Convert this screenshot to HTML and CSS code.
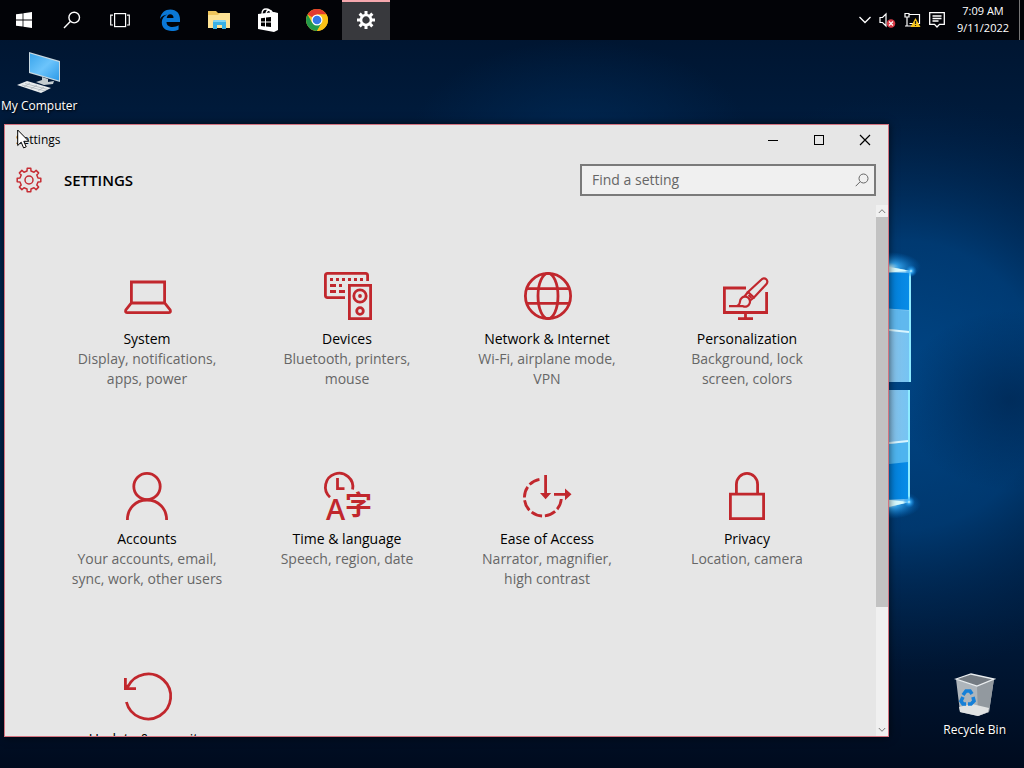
FILE: index.html
```html
<!DOCTYPE html>
<html lang="en">
<head>
<meta charset="utf-8">
<title>Settings</title>
<link rel="stylesheet" href="styles.css">
</head>
<body>
<div class="desktop">
  <svg class="wallpaper" viewBox="0 0 1024 768" preserveAspectRatio="xMaxYMid slice" aria-hidden="true">
    <defs>
      <linearGradient id="base" x1="0" y1="0" x2="0" y2="1">
        <stop offset="0" stop-color="#00132c"/><stop offset=".16" stop-color="#001b3c"/><stop offset=".45" stop-color="#002a58"/><stop offset=".8" stop-color="#001b3c"/><stop offset="1" stop-color="#000b1e"/>
      </linearGradient>
      <radialGradient id="glow" gradientUnits="userSpaceOnUse" cx="900" cy="385" r="290">
        <stop offset="0" stop-color="#004c90" stop-opacity=".8"/><stop offset=".5" stop-color="#00488a" stop-opacity=".6"/><stop offset="1" stop-color="#002650" stop-opacity="0"/>
      </radialGradient>
      <radialGradient id="beam"><stop offset="0" stop-color="#002c5a" stop-opacity=".7"/><stop offset="1" stop-color="#002c5a" stop-opacity="0"/></radialGradient>
      <radialGradient id="shade"><stop offset="0" stop-color="#001c40" stop-opacity=".5"/><stop offset="1" stop-color="#001c40" stop-opacity="0"/></radialGradient>
      <radialGradient id="flare"><stop offset="0" stop-color="#d8fbff"/><stop offset=".3" stop-color="#3cb4ff" stop-opacity=".8"/><stop offset="1" stop-color="#0078d8" stop-opacity="0"/></radialGradient>
      <linearGradient id="pane"><stop offset="0" stop-color="#8fc0e4"/><stop offset="1" stop-color="#74c4f4"/></linearGradient>
      <linearGradient id="deep"><stop offset="0" stop-color="#0078d0"/><stop offset="1" stop-color="#088ce8"/></linearGradient>
    </defs>
    <rect width="1024" height="768" fill="url(#base)"/>
    <ellipse cx="580" cy="140" rx="170" ry="100" fill="url(#beam)"/>
    <rect width="1024" height="768" fill="url(#glow)"/>
    <ellipse cx="1010" cy="400" rx="110" ry="90" fill="url(#shade)"/>
    <ellipse cx="889" cy="267" rx="32" ry="15" fill="url(#flare)"/>
    <ellipse cx="889" cy="504" rx="32" ry="15" fill="url(#flare)"/>
    <path d="M880 265L911 271V382H880z" fill="url(#pane)"/>
    <path d="M880 272L909 273V310L880 308z" fill="url(#deep)"/>
    <path d="M880 308L909 311V331L880 328z" fill="#60b8ee"/>
    <path d="M880 329L909 332" stroke="#d8f5ff" stroke-width="2"/>
    <path d="M880 390H910V502L880 509z" fill="url(#pane)"/>
    <path d="M880 445L908 442V463L880 465z" fill="#4eb4ef"/>
    <path d="M880 465L908 462V499L880 500z" fill="url(#deep)"/>
    <path d="M880 444L908 441" stroke="#d8f5ff" stroke-width="2"/>
    <path d="M880 265L911 271L880 273zM880 509L910 502L880 499z" fill="#d8fbff"/>
    <path d="M910 271V382M909 390V502" stroke="#8deaff" stroke-width="2" fill="none"/>
    <circle cx="911" cy="271" r="6" fill="url(#flare)"/><circle cx="909" cy="502" r="6" fill="url(#flare)"/>
  </svg>

  <header class="taskbar">
    <nav class="tasks" aria-label="Taskbar">
      <button class="task" aria-label="Start"><svg width="16" height="16" viewBox="0 0 16 16" fill="#fff"><path d="M0 2.3L6.6 1.4V7.6H0zM7.4 1.3L16 0V7.6H7.4zM0 8.4H6.6V14.6L0 13.7zM7.4 8.4H16V16L7.4 14.7z"/></svg></button>
      <button class="task" aria-label="Search"><svg width="18" height="18" viewBox="0 0 18 18" fill="none" stroke="#fff" stroke-width="1.4"><circle cx="11.2" cy="6.6" r="5.3"/><path d="M7.3 10.4L1 17"/></svg></button>
      <button class="task" aria-label="Task View"><svg width="20" height="16" viewBox="0 0 20 16" fill="none" stroke="#fff" stroke-width="1.2"><rect x="4.6" y="1.6" width="11" height="13"/><path d="M3 3.1H.7V13H3M17 3.1h2.3V13H17"/></svg></button>
      <span class="pins">
        <button class="task" aria-label="Microsoft Edge"><svg width="20" height="22" viewBox="0 0 20 22"><path fill="#0a78d6" d="M0 10C1 3.600 5.200.500 10.300.500 16.600.500 20 4.900 20 10.300V13H6.500C6.600 16.600 9.300 18 12.400 18 14.900 18 17 17.300 18.600 16.300V20.500C16.800 21.500 14.400 22 11.700 22 5.700 22 1.800 18.800 1.800 13.300 1.800 9.700 4 6.900 7.200 5.500 4.500 5.800 1.900 7 0 10zM6.700 9H13.500C13.500 6.600 12.300 5.300 10.200 5.300 8.300 5.300 7.100 6.700 6.700 9z"/></svg></button>
        <button class="task" aria-label="File Explorer"><svg width="22" height="20" viewBox="0 0 22 20"><path fill="#efc55c" d="M0 1H8L10 3H21V7H0z"/><path fill="#fde294" d="M0 5H10L12 3H22V18H0z"/><path fill="#38b0e4" d="M5 12Q5 10 7 10H16Q18 10 18 12V19H14V15H9V19H5z"/><path fill="#7fd3f2" d="M7 10H16Q18 10 18 12H5Q5 10 7 10z"/></svg></button>
        <button class="task" aria-label="Store"><svg width="22" height="24" viewBox="0 0 22 24"><path d="M5 6Q5 1 9 1T14 5M9 5Q10 2 12 2T16 5" fill="none" stroke="#fff" stroke-width="1.3"/><path d="M1 6L17 4L21 5V22L17 24L1 21z" fill="#fff"/><path d="M4 10.200L8 9.700V13.500H4zM9 9.600L14 9V13.500H9zM4 14.500H8V18.400L4 17.900zM9 14.500H14V19L9 18.500z" fill="#000"/></svg></button>
        <button class="task" aria-label="Google Chrome"><svg width="22" height="22" viewBox="0 0 22 22"><circle cx="11" cy="11" r="11" fill="#fbc116"/><path d="M11 11L1.500 5.500A11 11 0 0 1 20.500 5.500H11z" fill="#e33b2e"/><path d="M1.500 5.500A11 11 0 0 0 11 22L15.800 13.700L11 11L6.200 13.700z" fill="#229a4b"/><path d="M11 5.500H20.500A11 11 0 0 1 11 22L15.800 13.700z" fill="#fbc116"/><circle cx="11" cy="11" r="5.500" fill="#fff"/><circle cx="11" cy="11" r="4.300" fill="#3478e4"/></svg></button>
        <button class="task task-active" aria-label="Settings"><svg width="18" height="18" viewBox="-9 -9 18 18"><circle r="5" fill="none" stroke="#fff" stroke-width="2.600"/><g stroke="#fff" stroke-width="3"><path d="M0-9V-5.500M0 9V5.500M-9 0H-5.500M9 0H5.500"/><path d="M0-9V-5.500M0 9V5.500M-9 0H-5.500M9 0H5.500" transform="rotate(45)"/></g></svg></button>
      </span>
    </nav>
    <div class="tray">
      <svg width="12" height="8" viewBox="0 0 12 8" fill="none" stroke="#fff" stroke-width="1.300"><path d="M.5 1L6 6.500L11.500 1"/></svg>
      <svg width="17" height="16" viewBox="0 0 17 16"><path d="M1 5.500H3.500L7 2V14L3.500 10.500H1z" fill="none" stroke="#fff" stroke-width="1.200"/><circle cx="12" cy="11.500" r="4.300" fill="#d83a46"/><path d="M10 9.500L14 13.500M14 9.500L10 13.500" stroke="#fff" stroke-width="1.100"/></svg>
      <svg width="17" height="16" viewBox="0 0 17 16"><path d="M5.500 2.500H15.500V11.500H5.500M1 1.500H5V5H1zM3 5V14M1 14H9" fill="none" stroke="#fff" stroke-width="1.200"/><path d="M11.500 6L16.500 15H6.500z" fill="#f5c51c"/><path d="M11.500 9V12M11.500 13V14" stroke="#222" stroke-width="1.200"/></svg>
      <svg width="16" height="16" viewBox="0 0 16 16" fill="none" stroke="#fff" stroke-width="1.300"><path d="M.7.700H15.300V12.300H10.500L8 15L5.500 12.300H.7zM3.500 4H12.500M3.500 6.500H12.500M3.500 9H9.500"/></svg>
      <time class="clock" datetime="2022-09-11T07:09"><span>7:09 AM</span><span>9/11/2022</span></time>
    </div>
  </header>

  <a class="shortcut computer" href="#computer">
    <svg width="46" height="44" viewBox="0 0 46 44" aria-hidden="true"><defs><linearGradient id="screen" x2="1" y2="1"><stop offset="0" stop-color="#3aa5ec"/><stop offset=".5" stop-color="#6cc4fb"/><stop offset="1" stop-color="#2c9ae8"/></linearGradient></defs><path d="M13 1L44 10V31L13 22z" fill="#c8d8e0"/><path d="M14 2.500L43 11V29.500L14 21z" fill="url(#screen)"/><path d="M26 26L32 28V31L38 30L37 33L28 34L20 31L26 29z" fill="#c4ccd0"/><path d="M1 34L11 30L35 37L25 42z" fill="#e8ecee"/><path d="M6 34L29 40M9 32.500L32 38.500M8 36L14 32M15 38L21 34M22 40L28 36" stroke="#9aa5ab" stroke-width=".6"/></svg>
    <span>My Computer</span>
  </a>
  <a class="shortcut recycle" href="#recycle">
    <svg width="42" height="44" viewBox="0 0 42 44" aria-hidden="true"><path d="M2 6L21 12L40 6L35 39L24 43L6 39z" fill="#aeb5bb"/><path d="M23 13L40 6L35 39L24 43z" fill="#92999f"/><path d="M2 6L17 1L40 6L23 13z" fill="#747b82" stroke="#e9edef" stroke-width="1.300"/><path d="M5 34L18 31L35 35L34 39L24 43L6 39z" fill="#e0e2e2"/><g fill="none" stroke="#1680d8" stroke-width="3.600"><path d="M9 22L12 18H16L18 21"/><path d="M19 24L20 28L17 31H14"/><path d="M12 31H9L7 28L9 24"/></g></svg>
    <span>Recycle Bin</span>
  </a>

  <main class="window">
    <div class="titlebar">
      <span class="caption">Settings</span>
      <button class="control" aria-label="Minimize"><svg width="12" height="12" viewBox="0 0 12 12"><path d="M1 6.500H11" stroke="#000"/></svg></button>
      <button class="control" aria-label="Maximize"><svg width="12" height="12" viewBox="0 0 12 12"><rect x="1.500" y="1.500" width="9" height="9" fill="none" stroke="#000"/></svg></button>
      <button class="control" aria-label="Close"><svg width="12" height="12" viewBox="0 0 12 12"><path d="M1 1L11 11M11 1L1 11" stroke="#000" stroke-width="1.200"/></svg></button>
    </div>
    <div class="page-head">
      <svg class="gear" width="26" height="26" viewBox="-13 -13 26 26" fill="none" stroke="#c62c33" stroke-width="1.500" stroke-linejoin="round" aria-hidden="true"><circle r="4"/><path d="M-2-9L-1.800-11.800H1.800L2-9L5-7.800L7.100-9.600L9.600-7.100L7.800-5L9-2L11.800-1.800V1.800L9 2L7.800 5L9.600 7.100L7.100 9.600L5 7.800L2 9L1.800 11.800H-1.800L-2 9L-5 7.800L-7.100 9.600L-9.600 7.100L-7.800 5L-9 2L-11.800 1.800V-1.800L-9-2L-7.800-5L-9.600-7.100L-7.100-9.600L-5-7.800z"/></svg>
      <h1>SETTINGS</h1>
      <label class="search">
        <input type="search" placeholder="Find a setting" aria-label="Find a setting">
        <svg width="14" height="14" viewBox="0 0 14 14" fill="none" stroke="#666"><circle cx="8.500" cy="5.500" r="4.500"/><path d="M5.200 8.700L.7 13.200"/></svg>
      </label>
    </div>
    <div class="body">
      <div class="categories">
        <a class="category" href="#system">
          <svg class="icon" viewBox="0 0 48 48"><path d="M7.400 31V10H40.600V31M7.400 31H40.600L46.200 38Q47.200 40.600 44.500 40.600H3.500Q.8 40.600 1.800 38z"/></svg>
          <strong>System</strong><span>Display, notifications, apps, power</span>
        </a>
        <a class="category" href="#devices">
          <svg class="icon" viewBox="0 0 48 48"><path d="M21 25.600H3.500Q1.400 25.600 1.400 23.500V3.500Q1.400 1.400 3.500 1.400H41.500Q43.600 1.400 43.600 3.500V9M25.400 13.400H46.600V46.600H25.400z"/><path d="M6 7.500H42" stroke-dasharray="3"/><path d="M6 13.500H12M15 13.500H18M6 19.500H12M15 19.500H21"/><circle cx="36" cy="24" r="6.200"/><circle cx="36" cy="24" r="1.900" class="solid"/><circle cx="36" cy="39" r="3.300"/></svg>
          <strong>Devices</strong><span>Bluetooth, printers, mouse</span>
        </a>
        <a class="category" href="#network">
          <svg class="icon" viewBox="0 0 48 48"><circle cx="24" cy="24" r="22.600"/><ellipse cx="24" cy="24" rx="10" ry="22.600"/><path d="M3 16.700H45M3 31.300H45"/></svg>
          <strong>Network &amp; Internet</strong><span>Wi-Fi, airplane mode, VPN</span>
        </a>
        <a class="category" href="#personalization">
          <svg class="icon" viewBox="1 0 48 48"><path d="M23 16H1.400V40.500H43.600V20M22.500 40.500V46.500M15 46.600H30"/><g stroke-width="2.200"><path d="M25 20L38.500 7.500A3.200 3.200 0 0 1 43.500 12L31 25.500z"/><path d="M25 20L21.500 24.500M31 25.500L26.500 29M25.500 23L28.500 26"/><path d="M6 34.200H20A5 5 0 1 0 17 29.500Q16.500 34.200 12 34.200"/></g></svg>
          <strong>Personalization</strong><span>Background, lock screen, colors</span>
        </a>
        <a class="category" href="#accounts">
          <svg class="icon" viewBox="0 0 48 48"><circle cx="23" cy="14.500" r="13.200"/><path d="M3.400 48C3.400 36.500 11.500 28 23 28S42.600 36.500 42.600 48"/></svg>
          <strong>Accounts</strong><span>Your accounts, email, sync, work, other users</span>
        </a>
        <a class="category" href="#time">
          <svg class="icon" viewBox="0 0 48 48"><path d="M6 25.200A13.700 13.700 0 1 1 28.600 17.500M13.500 6V16.700H20.500"/><text class="letter" x="2" y="48">A</text><text class="hanzi" x="21" y="43">字</text></svg>
          <strong>Time &amp; language</strong><span>Speech, region, date</span>
        </a>
        <a class="category" href="#ease">
          <svg class="icon" viewBox="0 0 48 48"><path d="M37.300 27A18.500 18.500 0 1 1 17 7.100" stroke-dasharray="11.200 2.900"/><path d="M21.600 3V22M30 22.300H42"/><path class="solid" d="M16 21H27.200L21.600 27.200zM41 16.500L47.500 22.300L41 28.300z"/></svg>
          <strong>Ease of Access</strong><span>Narrator, magnifier, high contrast</span>
        </a>
        <a class="category" href="#privacy">
          <svg class="icon" viewBox="1 0 48 48"><path d="M7.400 22.100H40.600V46.600H7.400zM13.400 22V12.500A10.600 11.100 0 0 1 34.600 12.500V22"/></svg>
          <strong>Privacy</strong><span>Location, camera</span>
        </a>
        <a class="category" href="#update">
          <svg class="icon" viewBox="0 0 48 48"><path d="M2.400 30A22.500 22.500 0 1 0 4 14.500M1.400 6V16.700H12M1.500 16.700L5 13"/></svg>
          <strong>Update &amp; security</strong><span>Windows Update, recovery, backup</span>
        </a>
      </div>
      <div class="scrollbar" aria-hidden="true">
        <svg width="8" height="12" viewBox="0 0 8 12"><path d="M.8 8L4 4.700L7.200 8"/></svg>
        <div class="track"><div class="thumb"></div></div>
        <svg width="8" height="12" viewBox="0 0 8 12"><path d="M.8 4L4 7.300L7.200 4"/></svg>
      </div>
    </div>
  </main>

  <svg class="cursor" width="13" height="20" viewBox="0 0 13 20" aria-hidden="true"><path d="M.7 1V16.500L4.200 13.200L6.600 18.900L9.200 17.800L6.800 12.300H11.800z" fill="#fff" stroke="#000"/></svg>
</div>
</body>
</html>
```
FILE: styles.css
```css
* { box-sizing: border-box; }
body { margin: 0; font-family: "Open Sans", "Noto Sans", sans-serif; font-size: 14px; line-height: 20px; }
button { padding: 0; border: 0; background: transparent; }
a { color: inherit; text-decoration: none; }
.desktop { position: relative; height: 100vh; overflow: hidden; background: #001c3e; }
.wallpaper { position: absolute; inset: 0; width: 100%; height: 100%; }

.taskbar { position: relative; display: flex; justify-content: space-between; height: 40px; background: #020307; }
.tasks, .pins { display: flex; }
.pins { gap: 1px; margin-left: 2px; }
.task { display: flex; align-items: center; justify-content: center; width: 48px; height: 40px; }
.task-active { background: #38393d; box-shadow: inset 0 2px #f4a7ad; }
.tray { display: flex; align-items: center; gap: 8px; color: #fff; padding-right: 6px; border-right: 1px solid #777; margin-right: 4px; }
.clock { display: flex; flex-direction: column; align-items: center; width: 60px; padding-bottom: 2px; font-size: 11px; line-height: 17px; }

.shortcut { position: absolute; display: flex; flex-direction: column; align-items: center; gap: 2px; color: #fff; font-size: 12px; line-height: 18px; white-space: nowrap; text-shadow: 1px 1px 2px #000; }
.computer { left: 1px; top: 51px; }
.recycle { right: 18px; bottom: 29px; gap: 4px; }

.window { position: absolute; inset: 124px 135px 31px 4px; display: flex; flex-direction: column; background: #e6e6e6; border: 1px solid #d3737f; box-shadow: 0 0 8px #000a; }
.titlebar { display: flex; align-items: center; height: 30px; }
.caption { flex: 1; padding-left: 11px; font-size: 12px; }
.control { display: flex; align-items: center; justify-content: center; width: 46px; height: 30px; }
.page-head { display: flex; align-items: center; height: 50px; padding: 0 12px 0 11px; }
h1 { flex: 1; margin: 0 0 0 22px; font-size: 15px; font-weight: 600; }
.search { display: flex; align-items: center; width: 296px; height: 32px; padding: 0 5px 0 10px; border: 2px solid #7a7a7a; background: #f0f0f0; }
.search input { flex: 1; min-width: 0; padding: 0; border: 0; outline: 0; background: transparent; font: inherit; }
.search input::placeholder { color: #666; opacity: 1; }

.body { display: flex; flex: 1; min-height: 0; }
.categories { flex: 1; display: grid; grid-template-columns: repeat(auto-fill, 200px); grid-auto-rows: 200px; padding: 67px 20px 0 42px; overflow: hidden; }
.category { display: flex; flex-direction: column; align-items: center; padding: 0 24px; text-align: center; color: #666; }
.category strong { margin-top: 9px; color: #000; font-weight: 400; white-space: nowrap; }
.icon { flex: none; width: 48px; height: 48px; margin-left: 2px; overflow: visible; fill: none; stroke: #c1272d; stroke-width: 2.8; }
.icon .solid { fill: #c1272d; stroke: none; }
.icon text { fill: #c1272d; stroke: none; }
.letter { font: 600 29px "Open Sans", sans-serif; }
.hanzi { font: 700 27px "Noto Sans CJK SC", sans-serif; }
.scrollbar { display: flex; flex-direction: column; align-items: center; width: 12px; background: #f0f0f0; }
.scrollbar svg { fill: none; stroke: #777; }
.track { flex: 1; width: 12px; }
.thumb { height: 77%; background: #c2c2c2; }
.cursor { position: absolute; left: 17px; top: 129px; }
```
